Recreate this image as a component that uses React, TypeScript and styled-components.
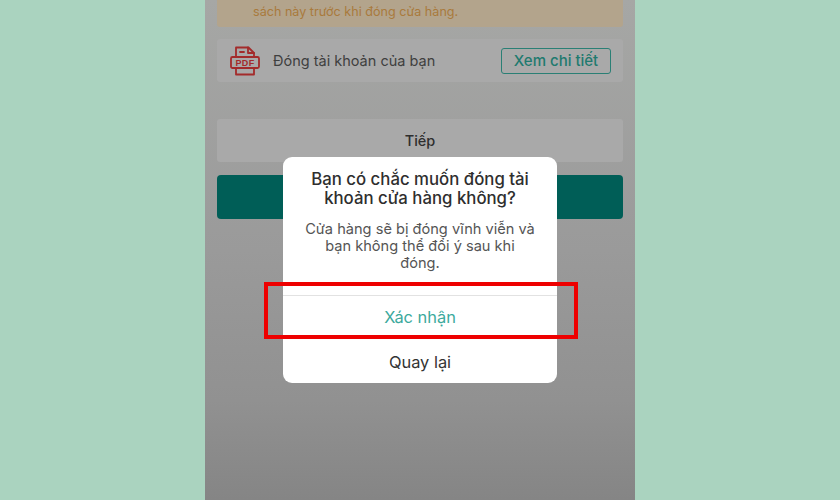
import React from 'react';
import styled, { createGlobalStyle } from 'styled-components';

const GlobalStyle = createGlobalStyle`
html, body {
  margin: 0;
  padding: 0;
  width: 840px;
  height: 500px;
  overflow: hidden;
  background: #aad3bf;
}
`;

const PdfIcon = () => (
    <svg width="30" height="30" viewBox="0 0 30 30" fill="none" stroke="#a32b2b" strokeWidth="1.8" strokeLinejoin="round" strokeLinecap="round">
        <path d="M6 11V1.5h12.5L24 7v4" />
        <path d="M18 1.5V7h6" />
        <path d="M10 6h4" />
        <rect x="1" y="11" width="28" height="11" rx="1.5" />
        <path d="M6 22v6.5h18V22" />
        <PdfLabel x="15" y="20" textAnchor="middle">PDF</PdfLabel>
    </svg>
);

const App = () => {
    return (
        <Page>
            <GlobalStyle />
            <Phone>
                <Notice>
                    <NoticeText>sách này trước khi đóng cửa hàng.</NoticeText>
                </Notice>
                <FileRow>
                    <FileInfo>
                        <PdfIcon />
                        <FileName>Đóng tài khoản của bạn</FileName>
                    </FileInfo>
                    <DetailButton>Xem chi tiết</DetailButton>
                </FileRow>
                <NextButton>Tiếp</NextButton>
                <TealButton />
                <Dialog>
                    <DialogBody>
                        <DialogTitle>Bạn có chắc muốn đóng tài khoản cửa hàng không?</DialogTitle>
                        <DialogText>Cửa hàng sẽ bị đóng vĩnh viễn và bạn không thể đổi ý sau khi đóng.</DialogText>
                    </DialogBody>
                    <DialogAction $confirm>Xác nhận</DialogAction>
                    <DialogAction>Quay lại</DialogAction>
                </Dialog>
                <Highlight />
            </Phone>
        </Page>
    );
}

const PdfLabel = styled.text`
font-family: "Liberation Sans", sans-serif;
font-size: 9px;
font-weight: 700;
letter-spacing: 0.4px;
fill: #a32b2b;
stroke: none;
`;

const Page = styled.div`
width: 840px;
height: 500px;
display: flex;
justify-content: center;
background: #aad3bf;
font-family: Inter, "Liberation Sans", sans-serif;
`;

const Phone = styled.div`
position: relative;
width: 430px;
height: 500px;
box-sizing: border-box;
padding: 0 12px;
display: flex;
flex-direction: column;
background: linear-gradient(180deg, #a6a7a5 0%, #9a9a9a 50%, #919191 80%, #858585 100%);
overflow: hidden;
`;

const Notice = styled.div`
height: 27px;
box-sizing: border-box;
padding: 0 0 7px 36px;
display: flex;
align-items: flex-end;
background: #b3a48c;
border-radius: 0 0 3px 3px;
`;

const NoticeText = styled.div`
font-size: 12.6px;
line-height: 16px;
color: #a97a3c;
`;

const FileRow = styled.div`
height: 43px;
margin-top: 12px;
box-sizing: border-box;
padding: 0 12px 0 13px;
display: flex;
align-items: center;
justify-content: space-between;
background: #a9a9a9;
border-radius: 3px;
`;

const FileInfo = styled.div`
display: flex;
align-items: center;
gap: 13px;
`;

const FileName = styled.div`
font-size: 14.5px;
color: #3f3f3f;
`;

const DetailButton = styled.div`
width: 110px;
height: 26px;
box-sizing: border-box;
display: flex;
align-items: center;
justify-content: center;
border: 1.5px solid #2a7f75;
border-radius: 3px;
font-size: 15px;
font-weight: 500;
color: #1f7a6f;
`;

const NextButton = styled.div`
height: 43px;
margin-top: 37px;
display: flex;
align-items: center;
justify-content: center;
background: #a9a9a9;
border-radius: 3px;
font-size: 14.5px;
font-weight: 500;
color: #2e2e2e;
`;

const TealButton = styled.div`
height: 44px;
margin-top: 13px;
background: #005e57;
border-radius: 4px;
`;

const Dialog = styled.div`
position: absolute;
left: 78px;
top: 157px;
width: 274px;
height: 226px;
display: flex;
flex-direction: column;
background: #ffffff;
border-radius: 9px;
overflow: hidden;
`;

const DialogBody = styled.div`
height: 138px;
box-sizing: border-box;
padding: 13px 22px 0;
text-align: center;
`;

const DialogTitle = styled.div`
font-size: 16.8px;
font-weight: 500;
line-height: 19px;
color: #2e2e2e;
`;

const DialogText = styled.div`
margin-top: 13px;
font-size: 14.6px;
line-height: 17px;
color: #555555;
`;

const DialogAction = styled.div<{ $confirm?: boolean }>`
flex: 1;
display: flex;
align-items: center;
justify-content: center;
padding-bottom: ${(p) => (p.$confirm ? '4px' : '0')};
font-size: 16.4px;
border-top: ${(p) => (p.$confirm ? '1px solid #e2e2e2' : 'none')};
color: ${(p) => (p.$confirm ? '#3ba99c' : '#333333')};
`;

const Highlight = styled.div`
position: absolute;
left: 59px;
top: 282px;
width: 314px;
height: 57px;
box-sizing: border-box;
border: 4px solid #ee0000;
`;

export default App;
